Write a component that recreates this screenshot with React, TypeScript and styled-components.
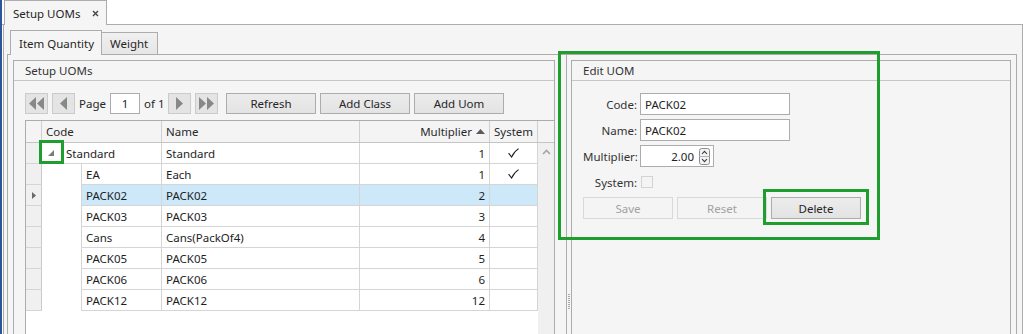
import React from "react";
import styled, { createGlobalStyle, css } from "styled-components";

const LINE = "#acacac";
const CELL = "#d5d5d5";
const PANEL = "#f5f5f5";
const GREEN = "#1f9d2f";

const GlobalStyle = createGlobalStyle`
  html, body { margin: 0; padding: 0; background: #ffffff; }
  body {
    font-family: "Noto Sans", "Open Sans", "DejaVu Sans", sans-serif;
    font-size: 11.5px;
    color: #1e1e1e;
  }
  * { box-sizing: border-box; }
`;

const Root = styled.div`
  position: relative;
  width: 1023px;
  height: 334px;
  overflow: hidden;
  border-left: 2px solid #2b579a;
  display: flex;
  flex-direction: column;
  background: #fff;
`;

/* ---------- document tab strip ---------- */
const TopStrip = styled.div`
  display: flex;
  height: 25px;
  flex-shrink: 0;
`;
const StripEdge = styled.div<{ $w?: number }>`
  ${(p) => (p.$w ? css`width: ${p.$w}px;` : css`flex: 1;`)}
  height: 100%;
  border-bottom: 1px solid ${LINE};
`;
const DocTab = styled.div`
  width: 103px;
  height: 25px;
  border: 1px solid ${LINE};
  border-bottom: none;
  background: ${PANEL};
  display: flex;
  align-items: center;
  padding-left: 8px;
  color: #262626;
  gap: 12px;
`;
const CloseIcon = styled.svg`
  width: 7px;
  height: 7px;
  margin-top: 1px;
`;

const Panel = styled.div`
  margin-left: 1px;
  flex: 1;
  min-height: 0;
  display: flex;
  flex-direction: column;
  border-left: 1px solid ${LINE};
  border-right: 1px solid ${LINE};
  background: ${PANEL};
  padding: 5px 5px 0 3px;
`;

/* ---------- inner tab strip ---------- */
const InnerStrip = styled.div`
  display: flex;
  align-items: flex-end;
  height: 25px;
  flex-shrink: 0;
`;
const InnerTab = styled.div<{ $active?: boolean; $w: number }>`
  width: ${(p) => p.$w}px;
  display: flex;
  align-items: center;
  padding-left: 8px;
  color: #262626;
  border: 1px solid ${LINE};
  ${(p) =>
    p.$active
      ? css`
          height: 25px;
          border-bottom: none;
          background: ${PANEL};
        `
      : css`
          height: 23px;
          border-left: none;
          background: linear-gradient(#f0f0f0, #e6e6e6);
        `}
`;

const InnerContent = styled.div`
  flex: 1;
  min-height: 0;
  display: flex;
  border-left: 1px solid ${LINE};
  border-right: 1px solid ${LINE};
  background: ${PANEL};
  padding: 0 5px;
`;

/* ---------- group boxes ---------- */
const Group = styled.section<{ $w?: number }>`
  position: relative;
  ${(p) => (p.$w ? css`width: ${p.$w}px;` : css`flex: 1;`)}
  margin-top: 5px;
  border: 1px solid ${LINE};
  border-bottom: none;
  background: ${PANEL};
  display: flex;
  flex-direction: column;
`;
const GroupHeader = styled.div`
  height: 20px;
  flex-shrink: 0;
  display: flex;
  align-items: center;
  padding-left: 11px;
  border-bottom: 1px solid #c6c6c6;
  color: #333;
`;
const LeftBody = styled.div`
  flex: 1;
  min-height: 0;
  display: flex;
  flex-direction: column;
  padding: 12px 0 0 11px;
`;

/* ---------- pager ---------- */
const Pager = styled.div`
  display: flex;
  align-items: center;
  gap: 4px;
  height: 21px;
  flex-shrink: 0;
`;
const NavButton = styled.div`
  width: 23px;
  height: 21px;
  border: 1px solid #cbcbcb;
  background: #e4e4e4;
  display: flex;
  align-items: center;
  justify-content: center;
`;
const PagerText = styled.span<{ $w: number }>`
  width: ${(p) => p.$w}px;
  color: #262626;
  white-space: nowrap;
`;
const PageInput = styled.div`
  width: 30px;
  height: 21px;
  border: 1px solid ${LINE};
  background: #fff;
  display: flex;
  align-items: center;
  justify-content: center;
`;
const Button = styled.div<{ $disabled?: boolean; $gapBefore?: number }>`
  position: relative;
  width: 90px;
  height: 22px;
  display: flex;
  align-items: center;
  justify-content: center;
  margin-left: ${(p) => p.$gapBefore ?? 0}px;
  ${(p) =>
    p.$disabled
      ? css`
          border: 1px solid #d9d9d9;
          background: #f4f4f4;
          color: #a2a2a2;
        `
      : css`
          border: 1px solid ${LINE};
          background: linear-gradient(#ececec, #e3e3e3);
          color: #262626;
        `}
`;
const PagerButton = styled(Button)`
  height: 21px;
`;

/* ---------- grid ---------- */
const Grid = styled.div`
  margin-top: 6px;
  flex: 1;
  min-height: 0;
  display: flex;
  flex-direction: column;
  border-top: 1px solid ${LINE};
  border-left: 1px solid ${LINE};
  background: #fff;
`;
const HeaderRow = styled.div`
  display: flex;
  height: 22px;
  flex-shrink: 0;
  border-bottom: 1px solid #c4c4c4;
  background: #f4f4f4;
`;
const HeaderCell = styled.div<{ $w: number; $align?: "left" | "right"; $last?: boolean }>`
  width: ${(p) => p.$w}px;
  display: flex;
  align-items: center;
  gap: 4px;
  justify-content: ${(p) => (p.$align === "right" ? "flex-end" : "flex-start")};
  padding: 0 4px;
  border-right: ${(p) => (p.$last ? "none" : "1px solid #cfcfcf")};
  color: #2a2a2a;
  white-space: nowrap;
`;
const GridBody = styled.div`
  flex: 1;
  display: flex;
  min-height: 0;
`;
const Rows = styled.div`
  width: 512px;
  display: flex;
  flex-direction: column;
`;
const ScrollTrack = styled.div`
  width: 16px;
  background: #f0f0f0;
  display: flex;
  justify-content: center;
  align-items: flex-start;
  padding-top: 6px;
`;
const Row = styled.div`
  display: flex;
  height: 21px;
  flex-shrink: 0;
`;
const RowHead = styled.div`
  width: 16px;
  background: #f0f0f0;
  border-right: 1px solid #cacaca;
  border-bottom: 1px solid ${CELL};
  display: flex;
  align-items: center;
  justify-content: center;
`;
const Indent = styled.div`
  width: 39px;
`;
const Cell = styled.div<{
  $w: number;
  $sel?: boolean;
  $child?: boolean;
  $align?: "left" | "right" | "center";
}>`
  position: relative;
  width: ${(p) => p.$w}px;
  display: flex;
  align-items: center;
  justify-content: ${(p) =>
    p.$align === "right" ? "flex-end" : p.$align === "center" ? "center" : "flex-start"};
  padding: 0 4px;
  border-right: 1px solid ${CELL};
  border-bottom: 1px solid ${CELL};
  ${(p) => p.$child && css`border-left: 1px solid ${CELL};`}
  background: ${(p) => (p.$sel ? "#cde8f8" : "#fff")};
  color: #1e1e1e;
  white-space: nowrap;
`;
const ExpanderCell = styled(Cell)`
  padding-left: 6px;
`;
const ExpanderText = styled.span`
  margin-left: 12px;
`;

/* ---------- splitter ---------- */
const Splitter = styled.div`
  width: 16px;
  display: flex;
  flex-shrink: 0;
`;
const SplitLine = styled.div`
  width: 12px;
  border-right: 1px solid ${LINE};
`;
const Grip = styled.div`
  width: 4px;
  padding: 239px 0 0 1px;
`;
const GripDots = styled.div`
  width: 2px;
  height: 16px;
  background: repeating-linear-gradient(#a8a8a8 0 1px, transparent 1px 2px);
`;

/* ---------- edit form ---------- */
const FormBody = styled.div`
  display: flex;
  flex-direction: column;
  padding: 10px 0 0 11px;
`;
const FormRow = styled.div`
  display: flex;
  align-items: center;
  gap: 3px;
  height: 26px;
`;
const FormLabel = styled.span`
  width: 54px;
  text-align: right;
  color: #333;
  white-space: nowrap;
`;
const TextBox = styled.div<{ $w: number }>`
  width: ${(p) => p.$w}px;
  height: 22px;
  border: 1px solid ${LINE};
  background: #fff;
  display: flex;
  align-items: center;
  padding: 0 4px;
  color: #1e1e1e;
`;
const SpinBox = styled(TextBox)`
  justify-content: flex-end;
  gap: 5px;
  padding: 0 3px 0 4px;
`;
const CheckBox = styled.div`
  width: 12px;
  height: 12px;
  margin-left: 1px;
  border: 1px solid #d3d3d3;
  background: #f4f4f4;
`;
const ButtonRow = styled.div`
  display: flex;
  gap: 4px;
  margin-top: 2px;
`;

/* ---------- annotation highlights ---------- */
const Highlight = styled.div<{ $l: number; $t: number; $w: number; $h: number }>`
  position: absolute;
  left: ${(p) => p.$l}px;
  top: ${(p) => p.$t}px;
  width: ${(p) => p.$w}px;
  height: ${(p) => p.$h}px;
  border: 3px solid ${GREEN};
  z-index: 5;
  pointer-events: none;
`;

/* ---------- icons ---------- */
const Tri = ({ dir, double }: { dir: "l" | "r"; double?: boolean }) => {
  const one = dir === "l" ? "7,0 7,13 0,6.5" : "0,0 0,13 7,6.5";
  const two = dir === "l" ? "15,0 15,13 8,6.5" : "8,0 8,13 15,6.5";
  return (
    <svg width={double ? 15 : 8} height={13} viewBox={`0 0 ${double ? 15 : 8} 13`}>
      <polygon points={one} fill="#888" />
      {double && <polygon points={two} fill="#888" />}
    </svg>
  );
};
const SortUp = () => (
  <svg width="9" height="5" viewBox="0 0 9 5">
    <polygon points="0,5 4.5,0 9,5" fill="#5a5a5a" />
  </svg>
);
const Check = () => (
  <svg width="11" height="10" viewBox="0 0 11 10">
    <path d="M0.6 5.2 L3.6 9 Q6 3.5 10.6 0.6" stroke="#1a1a22" strokeWidth="1.1" fill="none" />
  </svg>
);
const RowArrow = () => (
  <svg width="4" height="7" viewBox="0 0 4 7">
    <polygon points="0,0 4,3.5 0,7" fill="#6a6a6a" />
  </svg>
);
const Expander = () => (
  <svg width="6" height="6" viewBox="0 0 6 6">
    <polygon points="6,0 6,6 0,6" fill="#7c7c7c" />
  </svg>
);
const ScrollUp = () => (
  <svg width="9" height="6" viewBox="0 0 9 6">
    <path d="M1 5 L4.5 1.5 L8 5" stroke="#a6a6a6" strokeWidth="1.6" fill="none" />
  </svg>
);
const Spinner = () => (
  <svg width="11" height="17" viewBox="0 0 11 17">
    <rect x="0.5" y="0.5" width="10" height="16" rx="2" fill="#f2f2f2" stroke="#8d8d8d" />
    <line x1="0.5" y1="8.5" x2="10.5" y2="8.5" stroke="#b5b5b5" />
    <path d="M3 6 L5.5 3.3 L8 6" stroke="#3a3a3a" strokeWidth="1.1" fill="none" />
    <path d="M3 11 L5.5 13.7 L8 11" stroke="#3a3a3a" strokeWidth="1.1" fill="none" />
  </svg>
);

type Uom = {
  code: string;
  name: string;
  mult: string;
  sys?: boolean;
  parent?: boolean;
  selected?: boolean;
};

const uoms: Uom[] = [
  { code: "Standard", name: "Standard", mult: "1", sys: true, parent: true },
  { code: "EA", name: "Each", mult: "1", sys: true },
  { code: "PACK02", name: "PACK02", mult: "2", selected: true },
  { code: "PACK03", name: "PACK03", mult: "3" },
  { code: "Cans", name: "Cans(PackOf4)", mult: "4" },
  { code: "PACK05", name: "PACK05", mult: "5" },
  { code: "PACK06", name: "PACK06", mult: "6" },
  { code: "PACK12", name: "PACK12", mult: "12" },
];

export default function App() {
  return (
    <>
      <GlobalStyle />
      <Root>
        <TopStrip>
          <StripEdge $w={2} />
          <DocTab>
            <span>Setup UOMs</span>
            <CloseIcon viewBox="0 0 7 7">
              <path d="M1 1 L6 6 M6 1 L1 6" stroke="#444" strokeWidth="1.4" />
            </CloseIcon>
          </DocTab>
          <StripEdge />
        </TopStrip>

        <Panel>
          <InnerStrip>
            <StripEdge $w={3} />
            <InnerTab $active $w={92}>Item Quantity</InnerTab>
            <InnerTab $w={56}>Weight</InnerTab>
            <StripEdge />
          </InnerStrip>

          <InnerContent>
            <Group $w={542}>
              <GroupHeader>Setup UOMs</GroupHeader>
              <LeftBody>
                <Pager>
                  <NavButton>
                    <Tri dir="l" double />
                  </NavButton>
                  <NavButton>
                    <Tri dir="l" />
                  </NavButton>
                  <PagerText $w={27}>Page</PagerText>
                  <PageInput>1</PageInput>
                  <PagerText $w={20}>of 1</PagerText>
                  <NavButton>
                    <Tri dir="r" />
                  </NavButton>
                  <NavButton>
                    <Tri dir="r" double />
                  </NavButton>
                  <PagerButton $gapBefore={4}>Refresh</PagerButton>
                  <PagerButton>Add Class</PagerButton>
                  <PagerButton>Add Uom</PagerButton>
                </Pager>

                <Grid>
                  <HeaderRow>
                    <HeaderCell $w={16} />
                    <HeaderCell $w={120}>Code</HeaderCell>
                    <HeaderCell $w={198}>Name</HeaderCell>
                    <HeaderCell $w={130} $align="right">
                      <span>Multiplier</span>
                      <SortUp />
                    </HeaderCell>
                    <HeaderCell $w={48}>System</HeaderCell>
                    <HeaderCell $w={16} $last />
                  </HeaderRow>
                  <GridBody>
                    <Rows>
                      {uoms.map((u) => (
                        <Row key={u.code}>
                          <RowHead>{u.selected && <RowArrow />}</RowHead>
                          {u.parent ? (
                            <ExpanderCell $w={120}>
                              <Expander />
                              <ExpanderText>{u.code}</ExpanderText>
                              <Highlight $l={-3} $t={-3} $w={25} $h={24} />
                            </ExpanderCell>
                          ) : (
                            <>
                              <Indent />
                              <Cell $w={81} $child $sel={u.selected}>
                                {u.code}
                              </Cell>
                            </>
                          )}
                          <Cell $w={198} $sel={u.selected}>
                            {u.name}
                          </Cell>
                          <Cell $w={130} $sel={u.selected} $align="right">
                            {u.mult}
                          </Cell>
                          <Cell $w={48} $sel={u.selected} $align="center">
                            {u.sys && <Check />}
                          </Cell>
                        </Row>
                      ))}
                    </Rows>
                    <ScrollTrack>
                      <ScrollUp />
                    </ScrollTrack>
                  </GridBody>
                </Grid>
              </LeftBody>
            </Group>

            <Splitter>
              <SplitLine />
              <Grip>
                <GripDots />
              </Grip>
            </Splitter>

            <Group>
              <Highlight $l={-14} $t={-10} $w={322} $h={189} />
              <GroupHeader>Edit UOM</GroupHeader>
              <FormBody>
                <FormRow>
                  <FormLabel>Code:</FormLabel>
                  <TextBox $w={150}>PACK02</TextBox>
                </FormRow>
                <FormRow>
                  <FormLabel>Name:</FormLabel>
                  <TextBox $w={150}>PACK02</TextBox>
                </FormRow>
                <FormRow>
                  <FormLabel>Multiplier:</FormLabel>
                  <SpinBox $w={74}>
                    <span>2.00</span>
                    <Spinner />
                  </SpinBox>
                </FormRow>
                <FormRow>
                  <FormLabel>System:</FormLabel>
                  <CheckBox />
                </FormRow>
                <ButtonRow>
                  <Button $disabled>Save</Button>
                  <Button $disabled>Reset</Button>
                  <Button>
                    Delete
                    <Highlight $l={-9} $t={-9} $w={106} $h={36} />
                  </Button>
                </ButtonRow>
              </FormBody>
            </Group>
          </InnerContent>
        </Panel>
      </Root>
    </>
  );
}
